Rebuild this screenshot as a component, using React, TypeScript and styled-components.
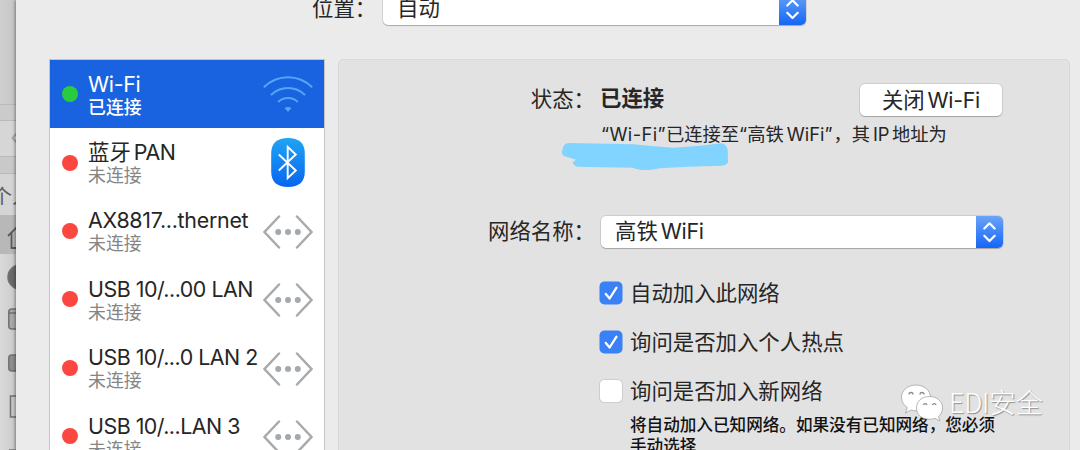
import React from "react";
import styled, { createGlobalStyle } from "styled-components";

const Global = createGlobalStyle`
  * { box-sizing: border-box; }
  body {
    margin: 0;
    background: #ebebeb;
    color: #262626;
    font-family: Inter, "Noto Sans CJK SC", sans-serif;
    font-size: 21.4px;
    overflow: hidden;
  }
`;

const Screen = styled.div`
  position: relative;
  display: flex;
  width: 1080px;
  height: 450px;
  overflow: hidden;
`;

/* Finder window that shows behind the preferences window */
const Behind = styled.div`
  flex: none;
  width: 16px;
  height: 450px;
  overflow: hidden;
  background: #d3d3d3;
`;

const Band = styled.div<{ $h: number; $bg: string; $line?: boolean }>`
  height: ${(p) => p.$h}px;
  background: ${(p) => p.$bg};
  border-bottom: ${(p) => (p.$line ? "1px solid #b9b9b9" : "0")};
  overflow: hidden;
  white-space: nowrap;
  svg { display: block; }
`;

const SideHeading = styled.span`
  display: block;
  margin-left: -8px;
  font-size: 20px;
  line-height: 46px;
  color: #5d5d5d;
`;

const Sheet = styled.main`
  flex: 1;
  height: 450px;
  padding-left: 34px;
  background: #ebebeb;
  box-shadow: -1px 0 3px rgba(0, 0, 0, 0.4);
`;

const LocationBar = styled.div`
  display: flex;
  height: 59px;
  padding-left: 262px;
`;

const LocationLabel = styled.span`
  width: 71px;
  line-height: 32px;
  margin-top: -8px;
  white-space: nowrap;
`;

const SelectBox = styled.div<{ $w: number }>`
  display: flex;
  width: ${(p) => p.$w}px;
  height: 32px;
  border-radius: 5px;
  background: #fff;
  box-shadow: 0 0 0 0.7px rgba(0, 0, 0, 0.12), 0 1px 1px rgba(0, 0, 0, 0.2);
  overflow: hidden;
`;

const SelectValue = styled.span`
  flex: 1;
  padding-left: 14px;
  line-height: 31px;
  white-space: nowrap;
`;

const Stepper = styled.span`
  width: 27px;
  background: linear-gradient(#6ba3f7, #4288f8 45%, #1566f5);
  svg { display: block; }
`;

const LocationSelect = styled(SelectBox)`
  margin-top: -7px;
`;

const Main = styled.div`
  display: flex;
  gap: 14px;
  height: 420px;
`;

const ServiceList = styled.ul`
  width: 274px;
  margin: 1px 0 0;
  padding: 0;
  list-style: none;
  background: #fff;
  box-shadow: 0 0 0 1px #c4c4c4;
`;

const ServiceRow = styled.li<{ $active?: boolean }>`
  display: flex;
  align-items: center;
  height: 68.4px;
  padding-left: 12px;
  background: ${(p) => (p.$active ? "#1a63e0" : "#fff")};
  color: ${(p) => (p.$active ? "#fff" : "#262626")};
`;

const Dot = styled.span<{ $on?: boolean }>`
  width: 16px;
  height: 16px;
  border-radius: 50%;
  background: ${(p) => (p.$on ? "#29cc41" : "#fc4741")};
`;

const ServiceText = styled.div`
  width: 185px;
  padding: 3px 0 0 10px;
  white-space: nowrap;
`;

const ServiceName = styled.div<{ $ls: number }>`
  height: 25px;
  line-height: 25px;
  letter-spacing: ${(p) => p.$ls}px;
`;

const ServiceState = styled.div<{ $active?: boolean }>`
  height: 23px;
  line-height: 22px;
  font-size: 17.9px;
  font-weight: ${(p) => (p.$active ? 500 : 400)};
  color: ${(p) => (p.$active ? "#fff" : "#858585")};
`;

const IconSlot = styled.span`
  width: 50px;
  height: 50px;
  svg { display: block; }
`;

const Panel = styled.section`
  width: 732px;
  padding-top: 24px;
  border: 1px solid #d9d9d9;
  border-radius: 5px;
  background: #e2e2e2;
`;

const Field = styled.div<{ $h: number }>`
  display: flex;
  height: ${(p) => p.$h}px;
`;

const Label = styled.span`
  width: 262px;
  padding-right: 6px;
  line-height: 30px;
  text-align: right;
  white-space: nowrap;
`;

const StatusValue = styled.strong`
  width: 259px;
  line-height: 29px;
  font-weight: 700;
  text-indent: -1px;
`;

const PushButton = styled.button`
  width: 142px;
  height: 32px;
  padding: 0;
  border: 0;
  border-radius: 5px;
  background: #fff;
  box-shadow: 0 0 0 0.7px rgba(0, 0, 0, 0.12), 0 1px 1px rgba(0, 0, 0, 0.2);
  color: #262626;
  font: inherit;
  line-height: 32px;
  letter-spacing: -0.2px;
  white-space: nowrap;
`;

const Latin = styled.span<{ $ls?: number; $left?: number; $right?: number }>`
  margin-left: ${(p) => p.$left ?? 3}px;
  margin-right: ${(p) => p.$right ?? 0}px;
  letter-spacing: ${(p) => p.$ls ?? -0.3}px;
`;

const StatusDetail = styled.div`
  position: relative;
  height: 100px;
  padding-left: 262px;
  font-size: 18.3px;
  line-height: 36px;
  white-space: nowrap;
`;

const Scribble = styled.svg`
  position: absolute;
  left: 221px;
  top: 26px;
`;

const CheckRow = styled.label<{ $h: number }>`
  display: flex;
  align-items: flex-start;
  height: ${(p) => p.$h}px;
  padding-left: 261px;
  line-height: 23px;
  white-space: nowrap;
`;

const CheckBox = styled.span<{ $on?: boolean }>`
  width: 22px;
  height: 22px;
  margin-right: 8px;
  border-radius: 4.5px;
  background: ${(p) => (p.$on ? "#3a80f6" : "#fff")};
  box-shadow: ${(p) => (p.$on ? "0 0 0 0.5px #3a80f6" : "0 0 0 1px #cdcdcd")};
  svg { display: block; }
`;

const Note = styled.p`
  width: 380px;
  margin: 0 0 0 291px;
  font-size: 16.6px;
  font-weight: 500;
  line-height: 21px;
  color: #111;
  white-space: nowrap;
`;

const Watermark = styled.div`
  position: absolute;
  left: 899px;
  top: 379px;
  display: flex;
  align-items: center;
  color: #fff;
  font-family: "Noto Sans CJK SC", sans-serif;
  font-size: 27px;
  font-weight: 300;
  line-height: 46px;
  letter-spacing: -0.3px;
  text-shadow: 1px 1px 1px #8f8f8f;
  white-space: nowrap;
  svg { margin-right: 4px; }
`;

const Arrows = () => (
  <Stepper>
    <svg width="27" height="32" viewBox="0 0 27 32" fill="none" stroke="#fff" strokeWidth="2.2" strokeLinecap="round" strokeLinejoin="round">
      <path d="M8.3 12.5 13.5 7.3 18.7 12.5M8.3 19.8 13.5 25 18.7 19.8" />
    </svg>
  </Stepper>
);

const WifiIcon = () => (
  <svg width="50" height="50" viewBox="0 0 50 50" fill="none" stroke="#51a7f8" strokeWidth="2">
    <path d="M.8 18.3C14.5 5 35.5 5 49.2 18.3M8 26C17.5 16.5 32.5 16.5 42 26M15.2 33C20.5 27.7 29.500 27.700 34.8 33" />
    <path d="M21.5 39.200Q25 36.700 28.5 39.200L25 42.700Z" fill="#51a7f8" stroke="none" />
  </svg>
);

const BluetoothIcon = () => (
  <svg width="50" height="50" viewBox="0 0 50 50">
    <defs>
      <linearGradient id="bt" x1="0" y1="0" x2="0" y2="1">
        <stop offset="0" stopColor="#1fa5f5" />
        <stop offset="1" stopColor="#0865f0" />
      </linearGradient>
    </defs>
    <path d="M25 0C36 0 41.8 5 41.8 15.5V33.5C41.8 44 36 49 25 49S8.2 44 8.2 33.5V15.5C8.2 5 14 0 25 0Z" fill="url(#bt)" />
    <path d="M15.8 16.5 32.8 32.5 24.7 40.1V8.900L32.8 16.5 15.8 32.5" fill="none" stroke="#fff" strokeWidth="1.9" />
  </svg>
);

const EthernetIcon = () => (
  <svg width="50" height="50" viewBox="0 0 50 50">
    <path d="M16 10.5 1.5 26 16 41.5M34 10.5 48.5 26 34 41.5" fill="none" stroke="#a7abae" strokeWidth="2.5" strokeLinecap="round" />
    <g fill="#a4a9ae">
      <circle cx="15.2" cy="26" r="3" />
      <circle cx="25" cy="26" r="3" />
      <circle cx="34.8" cy="26" r="3" />
    </g>
  </svg>
);

const Tick = () => (
  <svg width="22" height="22" viewBox="0 0 22 22" fill="none" stroke="#fff" strokeWidth="2.3" strokeLinecap="round" strokeLinejoin="round">
    <path d="M5.8 12 9.6 16.5 16.5 5.7" />
  </svg>
);

const WechatIcon = () => (
  <svg width="46" height="40" viewBox="0 0 46 40">
    <g fill="#fff" stroke="#a3a3a3" strokeWidth=".8">
      <path d="M17 3C8.5 3 2.500 8.500 2.500 15.500 2.500 19.700 4.700 23.200 8.300 25.500L6.500 31 12 28C14 28.700 16 29 18.500 29 28 28.500 31.500 22.500 31.500 15.500 31.500 8.500 25 3 17 3Z" />
      <path d="M30.500 14.500C22.800 14.500 17.500 19.300 17.500 26S22.800 37.300 30.500 37.300C32.700 37.300 34.500 37 36 36.400L40.800 39 39.500 34.600C42.200 32.500 43.500 29.500 43.500 26 43.500 19.300 38 14.500 30.500 14.500Z" />
    </g>
    <g fill="none" stroke="#8b8b8b" strokeWidth="1.300">
      <path d="M10 12.500A2 2 0 0 1 14 12.500M21 12.500A2 2 0 0 1 25 12.500M24.500 23A1.800 1.800 0 0 1 28 23M33.500 23A1.800 1.800 0 0 1 37 23" />
    </g>
  </svg>
);

const services = [
  { name: "AX8817...thernet", ls: -0.27 },
  { name: "USB 10/...00 LAN", ls: -0.48 },
  { name: "USB 10/...0 LAN 2", ls: -0.5 },
  { name: "USB 10/...LAN 3", ls: -0.5 },
];

export default function App() {
  return (
    <Screen lang="zh-CN">
      <Global />
      <Behind>
        <Band $h={105} $bg="linear-gradient(90deg, #cfcfcf, #c6c6c6)" $line />
        <Band $h={16} $bg="#cbcbcb" $line />
        <Band $h={36} $bg="#d6d6d6" $line>
          <svg width="16" height="36" fill="none" stroke="#a5a5a5" strokeWidth="1.8"><path d="M17 12 12.500 17 17 22" /></svg>
        </Band>
        <Band $h={17} $bg="#c9c9c9" $line />
        <Band $h={41} $bg="#d5d5d5"><SideHeading>个人</SideHeading></Band>
        <Band $h={39} $bg="#b8b8b8">
          <svg width="16" height="39" fill="none" stroke="#5b5b5b" strokeWidth="1.8"><path d="M8 21 18 11M11.500 18V33H18" /></svg>
        </Band>
        <Band $h={197} $bg="linear-gradient(90deg, #d9d9d9, #cbcbcb)">
          <svg width="16" height="197" fill="#a9a9a9" stroke="#717171" strokeWidth="1.5">
            <circle cx="20" cy="23" r="12" fill="#6a6a6a" />
            <rect x="8.8" y="55" width="20" height="20" rx="3" />
            <path d="M9 59H18" />
            <rect x="8.8" y="101" width="20" height="16" rx="3" fill="#8f8f8f" />
            <rect x="10.5" y="142" width="20" height="21" fill="#cacaca" />
            <path d="M9 196H18" />
          </svg>
        </Band>
      </Behind>
      <Sheet>
        <LocationBar>
          <LocationLabel>位置：</LocationLabel>
          <LocationSelect $w={423}>
            <SelectValue>自动</SelectValue>
            <Arrows />
          </LocationSelect>
        </LocationBar>
        <Main>
          <ServiceList>
            <ServiceRow $active>
              <Dot $on />
              <ServiceText>
                <ServiceName $ls={-0.3}>Wi-Fi</ServiceName>
                <ServiceState $active>已连接</ServiceState>
              </ServiceText>
              <IconSlot><WifiIcon /></IconSlot>
            </ServiceRow>
            <ServiceRow>
              <Dot />
              <ServiceText>
                <ServiceName $ls={0}>蓝牙<Latin $ls={-0.5}>PAN</Latin></ServiceName>
                <ServiceState>未连接</ServiceState>
              </ServiceText>
              <IconSlot><BluetoothIcon /></IconSlot>
            </ServiceRow>
            {services.map((s) => (
              <ServiceRow key={s.name}>
                <Dot />
                <ServiceText>
                  <ServiceName $ls={s.ls}>{s.name}</ServiceName>
                  <ServiceState>未连接</ServiceState>
                </ServiceText>
                <IconSlot><EthernetIcon /></IconSlot>
              </ServiceRow>
            ))}
          </ServiceList>
          <Panel>
            <Field $h={32}>
              <Label>状态：</Label>
              <StatusValue>已连接</StatusValue>
              <PushButton>关闭<Latin>Wi-Fi</Latin></PushButton>
            </Field>
            <StatusDetail>
              <Latin $ls={0.4} $left={0}>“Wi-Fi”</Latin>已连接至“高铁<Latin $ls={0} $right={1}>WiFi”</Latin>，其<Latin $right={3}>IP</Latin>地址为
              <Scribble width="170" height="30" viewBox="0 0 170 30">
                <path d="M1.700 10.300Q3 4 5 2.300 7 1 10 1L73 2.300Q95 4.500 113 5.700L140 3.700 162 1.300Q167 3 167.700 8L168 20.300Q167 23 162 23.700L127 24.700 100 26.300Q92 28.300 87 28 77 28 73 25.700L17 24.700Q13 23 12.700 20.300L16 17.700 3.300 13.700Z" fill="#80d4ff" />
              </Scribble>
            </StatusDetail>
            <Field $h={66}>
              <Label>网络名称：</Label>
              <SelectBox $w={402}>
                <SelectValue>高铁<Latin>WiFi</Latin></SelectValue>
                <Arrows />
              </SelectBox>
            </Field>
            <CheckRow $h={49}><CheckBox $on><Tick /></CheckBox>自动加入此网络</CheckRow>
            <CheckRow $h={49}><CheckBox $on><Tick /></CheckBox>询问是否加入个人热点</CheckRow>
            <CheckRow $h={35}><CheckBox />询问是否加入新网络</CheckRow>
            <Note>将自动加入已知网络。如果没有已知网络，您必须<br />手动选择</Note>
          </Panel>
        </Main>
      </Sheet>
      <Watermark><WechatIcon />EDI安全</Watermark>
    </Screen>
  );
}
